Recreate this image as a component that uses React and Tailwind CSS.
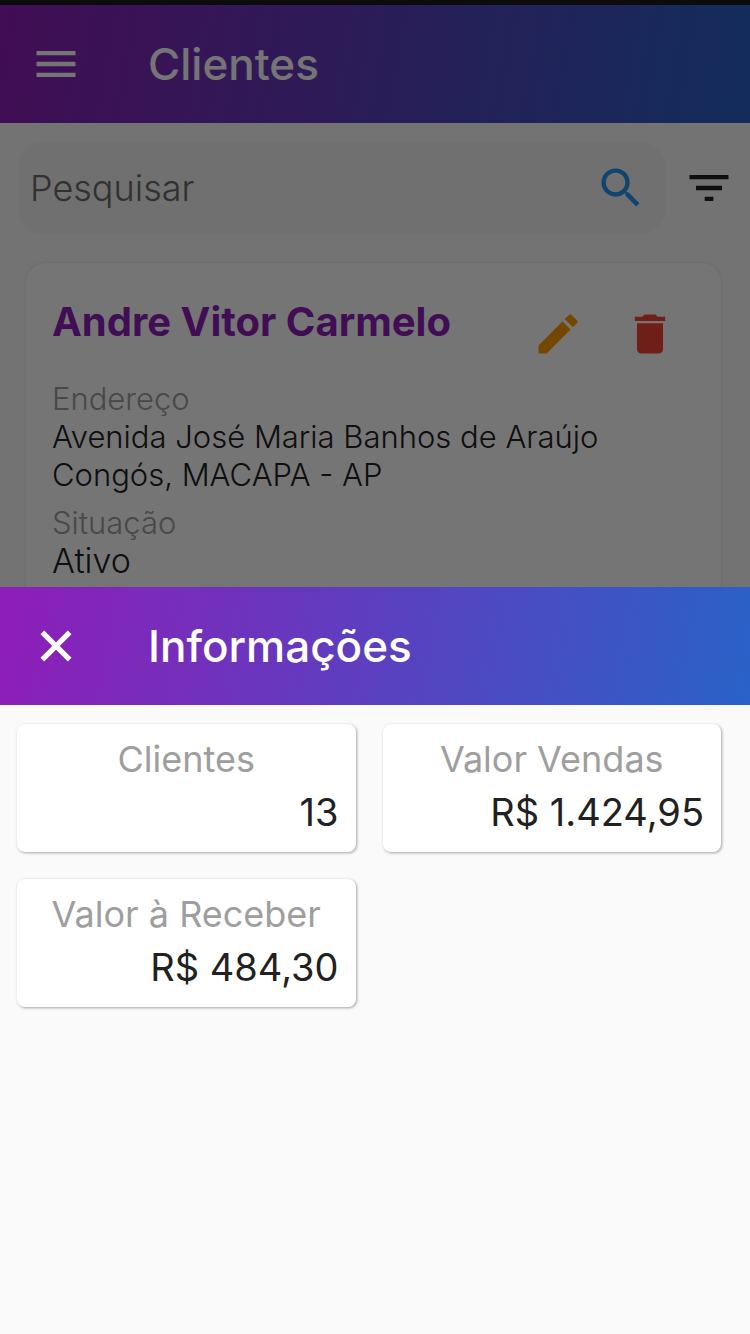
import { MdMenu, MdSearch, MdFilterList, MdEdit, MdDelete } from "react-icons/md";

const totals = [
  { label: "Clientes", value: "13" },
  { label: "Valor Vendas", value: "R$ 1.424,95" },
  { label: "Valor à Receber", value: "R$ 484,30" },
];

function CloseIcon() {
  return (
    <svg viewBox="0 0 24 24" className="size-[52px]" fill="none" stroke="currentColor" strokeWidth="2.4" aria-hidden="true">
      <path d="M5.7 5.7 18.3 18.3M18.3 5.7 5.7 18.3" />
    </svg>
  );
}

function TopBar({ title, action, icon }) {
  return (
    <header className="flex h-[118px] items-center gap-[66px] bg-linear-[100deg] from-[#8f1db7] to-[#2962c8] pl-[30px] text-white">
      <button type="button" aria-label={action}>
        {icon}
      </button>
      <h1 className="text-[44px] leading-[50px] font-medium">{title}</h1>
    </header>
  );
}

function ClientCard() {
  return (
    <article className="mr-[29px] ml-[26px] flex-1 rounded-t-[20px] bg-white px-[26px] pt-[34px] shadow-[0_0_3px_rgba(0,0,0,0.12)]">
      <div className="flex items-start justify-between">
        <h2 className="text-[40px] leading-[50px] font-bold text-[#8f1db7]">Andre Vitor Carmelo</h2>
        <div className="mr-[19px] flex gap-10 pt-[11px]">
          <button type="button" aria-label="Editar" className="text-[#ff9800]">
            <MdEdit size={52} />
          </button>
          <button type="button" aria-label="Excluir" className="text-[#f44336]">
            <MdDelete size={52} />
          </button>
        </div>
      </div>
      <dl className="mt-[20px] text-[31px] leading-[38px] font-light text-[#212121]">
        <dt className="text-[#9e9e9e]">Endereço</dt>
        <dd>
          Avenida José Maria Banhos de Araújo
          <br />
          Congós, MACAPA - AP
        </dd>
        <dt className="mt-[10px] text-[#9e9e9e]">Situação</dt>
        <dd className="text-[34px]">Ativo</dd>
      </dl>
    </article>
  );
}

export default function App() {
  return (
    <div className="relative flex h-screen flex-col overflow-hidden bg-[#fafafa] font-['Inter',sans-serif]">
      <div className="h-[5px] shrink-0 bg-[#1c1c1c]" />
      <TopBar title="Clientes" action="Menu" icon={<MdMenu size={52} />} />
      <main className="flex flex-1 flex-col">
        <div className="mt-[19px] mb-[29px] flex items-center gap-[18px] pr-[15px] pl-[18px]">
          <div className="flex h-[92px] min-w-0 flex-1 items-center rounded-[24px] bg-[#f5f5f5] pr-[18px] pl-3">
            <input
              type="text"
              aria-label="Pesquisar"
              placeholder="Pesquisar"
              className="h-[60px] min-w-0 flex-1 bg-transparent text-[36px] font-light outline-none placeholder:text-[#6b6b6b]"
            />
            <MdSearch size={52} className="text-[#2196f3]" />
          </div>
          <button type="button" aria-label="Filtrar" className="text-[#212121]">
            <MdFilterList size={52} />
          </button>
        </div>
        <ClientCard />
      </main>

      <div className="absolute inset-0 flex flex-col justify-end bg-black/54">
        <section role="dialog" aria-label="Informações" className="h-[56vh] bg-[#fafafa]">
          <TopBar title="Informações" action="Fechar" icon={<CloseIcon />} />
          <div className="grid grid-cols-2 gap-[27px] pt-[19px] pr-[29px] pl-[17px]">
            {totals.map((total) => (
              <div
                key={total.label}
                className="h-[128px] rounded-lg bg-white px-[17px] pt-3 shadow-[1px_1px_3px_rgba(0,0,0,0.35)]"
              >
                <p className="text-center text-[36px] leading-[46px] text-[#9e9e9e]">{total.label}</p>
                <p className="mt-[5px] text-right text-[38px] leading-[50px] text-[#212121]">{total.value}</p>
              </div>
            ))}
          </div>
        </section>
      </div>
    </div>
  );
}
